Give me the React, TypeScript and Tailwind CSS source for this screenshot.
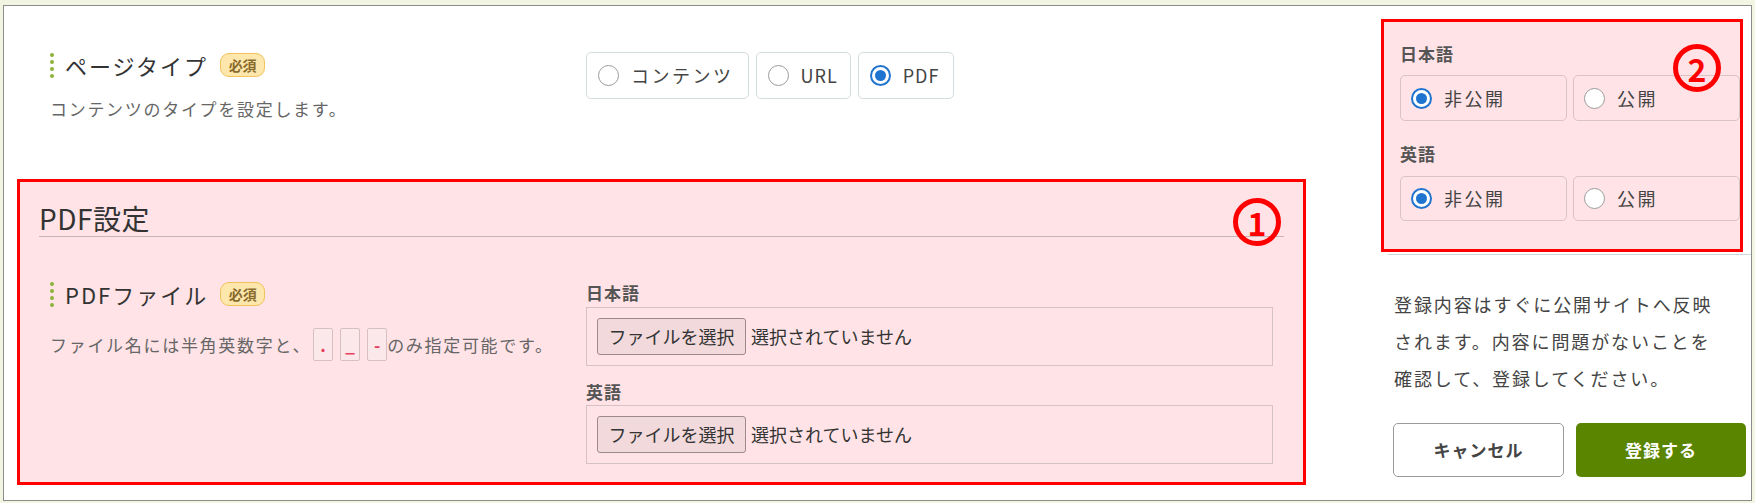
import type { ReactNode } from 'react';

function Dots() {
  return (
    <div className="flex flex-col gap-[3px] mr-[11px]">
      <span className="w-[4px] h-[4px] rounded-full bg-[#8db33a]" />
      <span className="w-[4px] h-[4px] rounded-full bg-[#8db33a]" />
      <span className="w-[4px] h-[4px] rounded-full bg-[#8db33a]" />
      <span className="w-[4px] h-[4px] rounded-full bg-[#8db33a]" />
    </div>
  );
}

function Required() {
  return (
    <span className="ml-[12px] inline-flex items-center justify-center w-[45px] h-[24px] rounded-[9px] border-[1.5px] border-[#f2c35a] bg-[#fde7ac] text-[14px] font-bold text-[#8a6b2c] leading-none">
      必須
    </span>
  );
}

function Radio({ checked }: { checked?: boolean }) {
  if (checked) {
    return (
      <span className="w-[21px] h-[21px] rounded-full border-[2px] border-[#1f74d0] bg-white flex items-center justify-center shrink-0">
        <span className="w-[11px] h-[11px] rounded-full bg-[#1f74d0]" />
      </span>
    );
  }
  return <span className="w-[21px] h-[21px] rounded-full border-[1.5px] border-[#9b9b9b] bg-white shrink-0" />;
}

function Option({ label, checked, className, latin }: { label: string; checked?: boolean; className: string; latin?: boolean }) {
  return (
    <div className={`flex items-center rounded-[5px] border ${className}`}>
      <Radio checked={checked} />
      <span className={`ml-[12px] text-[18px] text-[#444] ${latin ? 'tracking-[1px]' : 'tracking-[2.5px]'}`}>{label}</span>
    </div>
  );
}

function FileBox() {
  return (
    <div className="w-[687px] h-[59px] border border-[#d6c2c4] flex items-center pl-[10px]">
      <span className="h-[37px] w-[149px] flex items-center justify-center rounded-[3px] border border-[#9e8a8c] bg-[#f1d9dc] text-[18px] text-[#333]">
        ファイルを選択
      </span>
      <span className="ml-[5px] text-[18px] text-[#333]">選択されていません</span>
    </div>
  );
}

function Code({ children }: { children: ReactNode }) {
  return (
    <span className="w-[20px] h-[33px] rounded-[2px] border border-[#d6c0c2] bg-[#fbe8ea] flex items-center justify-center text-[17px] font-bold text-[#e8405e] leading-none tracking-normal">
      {children}
    </span>
  );
}

function Marker({ n }: { n: string }) {
  return (
    <div className="w-[48px] h-[48px] rounded-full border-[5px] border-[#ff0000] flex items-center justify-center text-[32px] font-bold text-[#ff0000] leading-none">
      {n}
    </div>
  );
}

export default function App() {
  return (
    <div className="w-[1755px] h-[503px] bg-[#f1f5e2] pt-[5px] pl-[3px] pr-[3px] font-['Noto_Sans_CJK_JP','Noto_Sans',sans-serif]">
      <div className="h-[496px] bg-white border border-[#8c8c8c] flex">
        {/* main column */}
        <div className="pl-[13px]">
          <div className="flex items-start pl-[33px] pt-[47px]">
            <div className="w-[536px]">
              <div className="flex items-center h-[24px]">
                <Dots />
                <span className="text-[22px] tracking-[2px] text-[#333]">ページタイプ</span>
                <Required />
              </div>
              <p className="mt-[20px] text-[17px] leading-[24px] tracking-[1.7px] text-[#666]">
                コンテンツのタイプを設定します。
              </p>
            </div>
            <div className="flex gap-[7px] mt-[-1px]">
              <Option label="コンテンツ" className="h-[47px] pl-[11px] pr-[14px] border-[#d3dcdf] bg-white" />
              <Option label="URL" latin className="h-[47px] pl-[11px] pr-[12px] border-[#d3dcdf] bg-white" />
              <Option label="PDF" latin checked className="h-[47px] pl-[11px] pr-[14px] border-[#d3dcdf] bg-white" />
            </div>
          </div>

          <div className="relative mt-[58px] w-[1289px] h-[306px] border-[3px] border-[#ff0000] bg-[#ffe3e6]">
            <div className="px-[19px] pt-[20px]">
              <div className="border-b border-[#c6b5b7] pb-[2px] text-[28px] leading-[32px] tracking-[0.5px] text-[#333]">PDF設定</div>
            </div>
            <div className="absolute right-[22px] top-[16px]">
              <Marker n="1" />
            </div>
            <div className="flex items-start pl-[30px] mt-[44px]">
              <div className="w-[536px] pt-[1px]">
                <div className="flex items-center h-[24px]">
                  <Dots />
                  <span className="text-[22px] tracking-[2px] text-[#333]">PDFファイル</span>
                  <Required />
                </div>
                <div className="mt-[22px] flex items-center h-[33px] text-[17px] tracking-[1.7px] text-[#666]">
                  <span>ファイル名には半角英数字と、</span>
                  <div className="flex gap-[7px] ml-[2px]">
                    <Code>.</Code>
                    <Code>_</Code>
                    <Code>-</Code>
                  </div>
                  <span>のみ指定可能です。</span>
                </div>
              </div>
              <div>
                <div className="h-[24px] leading-[24px] text-[17px] font-bold tracking-[1px] text-[#555]">日本語</div>
                <div className="mt-[2px]">
                  <FileBox />
                </div>
                <div className="mt-[14px] h-[24px] leading-[24px] text-[17px] font-bold tracking-[1px] text-[#555]">英語</div>
                <div className="mt-[1px]">
                  <FileBox />
                </div>
              </div>
            </div>
          </div>
        </div>

        {/* side column */}
        <div className="ml-[75px] w-[370px]">
          <div className="relative mt-[13px] w-[362px] h-[233px] border-[3px] border-[#ff0000] bg-[#ffe3e6] pl-[16px] pt-[20px]">
            <div className="h-[24px] leading-[24px] text-[17px] font-bold tracking-[1px] text-[#555]">日本語</div>
            <div className="mt-[9px] flex gap-[6px]">
              <Option label="非公開" checked className="w-[167px] h-[46px] pl-[10px] border-[#d9c3c5]" />
              <Option label="公開" className="w-[167px] h-[46px] pl-[10px] border-[#d9c3c5]" />
            </div>
            <div className="mt-[21px] h-[24px] leading-[24px] text-[17px] font-bold tracking-[1px] text-[#555]">英語</div>
            <div className="mt-[10px] flex gap-[6px]">
              <Option label="非公開" checked className="w-[167px] h-[45px] pl-[10px] border-[#d9c3c5]" />
              <Option label="公開" className="w-[167px] h-[45px] pl-[10px] border-[#d9c3c5]" />
            </div>
            <div className="absolute left-[289px] top-[22px]">
              <Marker n="2" />
            </div>
          </div>
          <div className="ml-[7px] mt-[2px] h-px bg-[#cfd6d8]" />
          <p className="pl-[13px] mt-[31px] text-[18px] leading-[37px] tracking-[1.9px] text-[#444]">
            登録内容はすぐに公開サイトへ反映
            <br />
            されます。内容に問題がないことを
            <br />
            確認して、登録してください。
          </p>
          <div className="pl-[12px] mt-[26px] flex gap-[12px]">
            <button className="w-[171px] h-[54px] rounded-[5px] border border-[#9a9a9a] bg-white text-[17px] font-bold tracking-[1px] text-[#444]">
              キャンセル
            </button>
            <button className="w-[170px] h-[54px] rounded-[5px] bg-[#5a8500] text-[17px] font-bold tracking-[1px] text-white">
              登録する
            </button>
          </div>
        </div>
      </div>
    </div>
  );
}
